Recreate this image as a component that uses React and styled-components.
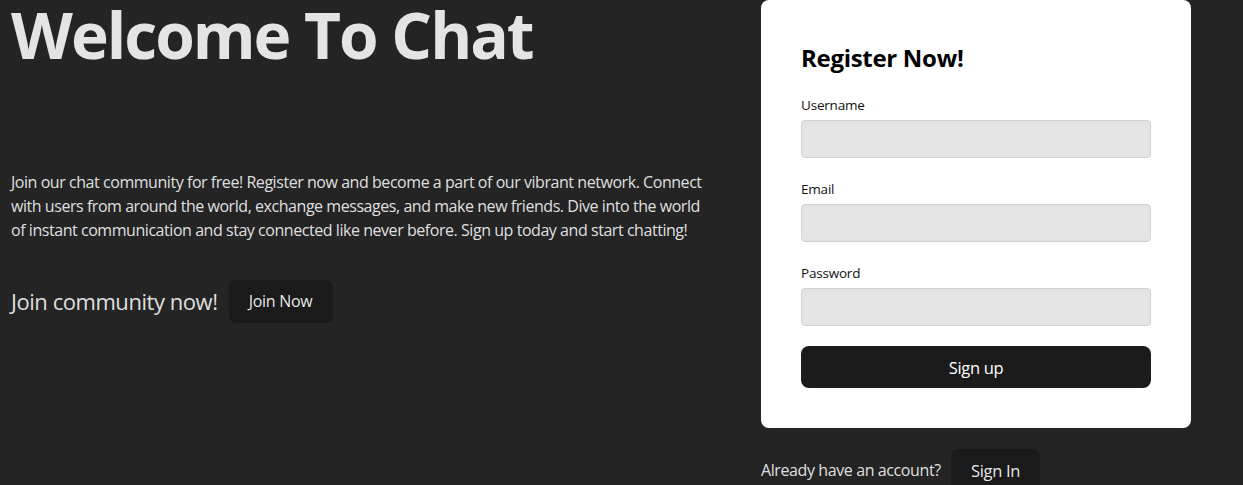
import React from "react";
import styled, { createGlobalStyle } from "styled-components";

const Global = createGlobalStyle`
  html, body {
    margin: 0;
    padding: 0;
    background: #242424;
  }
  body {
    font-family: "Open Sans", "Noto Sans", sans-serif;
    color: rgba(255, 255, 255, 0.87);
    font-size: 16px;
    line-height: 1.5;
    -webkit-font-smoothing: antialiased;
  }
`;

const Page = styled.div`
  display: flex;
  align-items: flex-start;
  gap: 50px;
  padding-left: 11px;
`;

const Intro = styled.section`
  width: 700px;
  display: flex;
  flex-direction: column;
`;

const Title = styled.h1`
  margin: 0;
  font-size: 64px;
  font-weight: 700;
  line-height: 1.1;
  color: #e4e4e4;
  letter-spacing: -2px;
  white-space: nowrap;
`;

const Blurb = styled.p`
  margin: 100px 0 0;
  font-size: 16px;
  line-height: 24px;
  letter-spacing: -0.45px;
`;

const CtaRow = styled.div`
  display: flex;
  align-items: center;
  gap: 11px;
  margin-top: 38px;
`;

const CtaText = styled.span`
  font-size: 22px;
  letter-spacing: -0.45px;
`;

const DarkButton = styled.button`
  border: 1px solid transparent;
  border-radius: 8px;
  background: #1a1a1a;
  color: rgba(255, 255, 255, 0.92);
  font-family: inherit;
  font-size: ${(p) => p.$size || 16}px;
  font-weight: 500;
  line-height: 21px;
  padding: 9.6px 19.2px;
  letter-spacing: -0.3px;
  cursor: pointer;
`;

const Side = styled.section`
  width: 430px;
  display: flex;
  flex-direction: column;
  gap: 21px;
`;

const Card = styled.form`
  background: #ffffff;
  border-radius: 8px;
  padding: 40px;
  display: flex;
  flex-direction: column;
  color: #111;
`;

const CardTitle = styled.h2`
  margin: 0 0 19px;
  font-size: 24px;
  line-height: 36px;
  font-weight: 700;
  color: #000;
  letter-spacing: -0.3px;
`;

const Field = styled.div`
  display: flex;
  flex-direction: column;
  gap: 5px;
  margin-bottom: 21px;
`;

const Label = styled.label`
  font-size: 13.5px;
  line-height: 20px;
  color: #111;
  letter-spacing: -0.2px;
`;

const Input = styled.input`
  box-sizing: border-box;
  height: 38px;
  width: 100%;
  border: 1px solid #cfcfcf;
  border-radius: 4px;
  background: #e4e4e4;
  outline: none;
`;

const Submit = styled.button`
  margin-top: -1px;
  height: 42px;
  border: none;
  border-radius: 8px;
  background: #1b1b1b;
  color: #fff;
  font-family: inherit;
  font-size: 16.5px;
  letter-spacing: -0.3px;
  cursor: pointer;
`;

const AccountRow = styled.div`
  display: flex;
  align-items: center;
  gap: 10px;
`;

const AccountText = styled.span`
  font-size: 16px;
  letter-spacing: -0.4px;
`;

export default function App() {
  return (
    <>
      <Global />
      <Page>
        <Intro>
          <Title>Welcome To Chat</Title>
          <Blurb>
            Join our chat community for free! Register now and become a part of our vibrant
            network. Connect with users from around the world, exchange messages, and make new
            friends. Dive into the world of instant communication and stay connected like never
            before. Sign up today and start chatting!
          </Blurb>
          <CtaRow>
            <CtaText>Join community now!</CtaText>
            <DarkButton type="button">Join Now</DarkButton>
          </CtaRow>
        </Intro>
        <Side>
          <Card onSubmit={(e) => e.preventDefault()}>
            <CardTitle>Register Now!</CardTitle>
            <Field>
              <Label>Username</Label>
              <Input type="text" />
            </Field>
            <Field>
              <Label>Email</Label>
              <Input type="email" />
            </Field>
            <Field>
              <Label>Password</Label>
              <Input type="password" />
            </Field>
            <Submit type="submit">Sign up</Submit>
          </Card>
          <AccountRow>
            <AccountText>Already have an account?</AccountText>
            <DarkButton type="button" $size={16.5}>Sign In</DarkButton>
          </AccountRow>
        </Side>
      </Page>
    </>
  );
}
